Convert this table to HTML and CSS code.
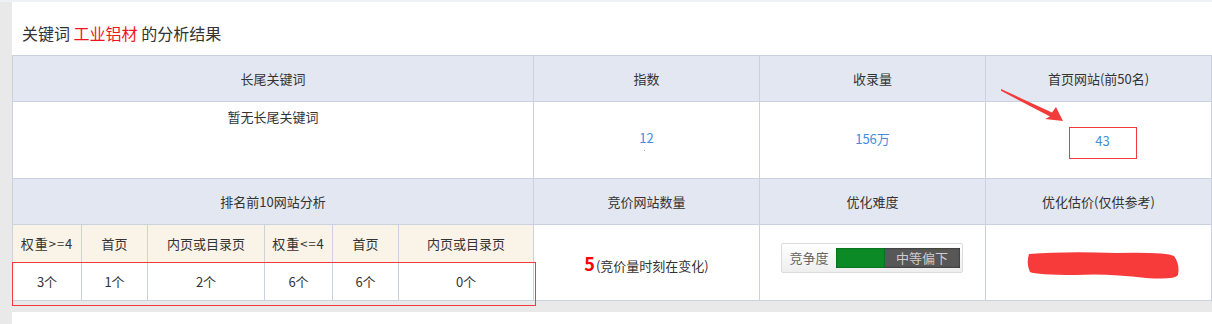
FILE: index.html
```html
<!DOCTYPE html>
<html lang="zh-CN">
<head>
  <meta charset="UTF-8">
  <title>关键词分析结果</title>
  <link rel="stylesheet" href="styles.css">
</head>
<body>

  <div class="page">
    <div class="panel">
      <div class="result-title">关键词 <span class="kw">工业铝材</span> 的分析结果</div>

      <div class="table-wrap">
        <table class="result">
          <colgroup>
            <col style="width:69px"><col style="width:66px"><col style="width:117px">
            <col style="width:68px"><col style="width:66px"><col style="width:135px">
            <col style="width:226px"><col style="width:226px"><col style="width:226px">
          </colgroup>
          <tr class="head">
            <th colspan="6">长尾关键词</th>
            <th>指数</th>
            <th>收录量</th>
            <th>首页网站(前50名)</th>
          </tr>
          <tr class="data">
            <td colspan="6" class="longtail">暂无长尾关键词</td>
            <td><span class="num">12</span><span class="dot"></span></td>
            <td><span class="num">156万</span></td>
            <td><span class="num boxed">43</span></td>
          </tr>
          <tr class="head">
            <th colspan="6">排名前10网站分析</th>
            <th>竞价网站数量</th>
            <th>优化难度</th>
            <th>优化估价(仅供参考)</th>
          </tr>
          <tr class="sub">
            <th class="cmp">权重&gt;=4</th>
            <th>首页</th>
            <th>内页或目录页</th>
            <th class="cmp">权重&lt;=4</th>
            <th>首页</th>
            <th>内页或目录页</th>
            <td rowspan="2" class="bid"><span class="bid-num">5</span>(竞价量时刻在变化)</td>
            <td rowspan="2" class="diff">
              <div class="level">
                <span class="level-label">竞争度</span>
                <span class="level-bar">
                  <span class="level-fill"></span>
                  <span class="level-text">中等偏下</span>
                </span>
              </div>
            </td>
            <td rowspan="2" class="price">
              <svg class="scribble" width="156" height="30" viewBox="0 0 156 30">
                <path d="M3 4 Q40 1 90 3 Q140 2 148 6 Q154 14 152 25 Q149 30 120 28 Q80 23 50 25 Q10 25 4 22 Q0 14 3 4 Z" fill="#f73b3b"/>
              </svg>
            </td>
          </tr>
          <tr class="counts">
            <td>3个</td>
            <td>1个</td>
            <td>2个</td>
            <td>6个</td>
            <td>6个</td>
            <td>0个</td>
          </tr>
        </table>

        <!-- 标注：箭头和红框 -->
        <svg class="mark-arrow" width="66" height="36" viewBox="0 0 66 36">
          <polygon points="0,0 51,23.5 55,18 62,32 44,30 49,27.5 0,1.8" fill="#f23c3c"/>
        </svg>
        <div class="mark-box"></div>
      </div>
    </div>
    <div class="panel next"></div>
  </div>

</body>
</html>
```

FILE: styles.css
```css
body {
  margin: 0;
  background: #e9e9e9;
  font-family: "Noto Sans CJK SC", "Noto Sans", sans-serif;
  font-size: 13px;
  color: #333333;
  overflow: hidden;
}

.page {
  padding-left: 12px;
  border-top: 2px solid #eef1f5;
}

.panel {
  background: #ffffff;
}

.panel.next {
  margin-top: 11px;
  height: 40px;
}

.result-title {
  font-size: 16px;
  line-height: 22px;
  padding: 20px 0 11px 10px;
}

.result-title .kw {
  color: #f0141e;
}

.table-wrap {
  position: relative;
}

.result {
  border-collapse: collapse;
  table-layout: fixed;
  width: 1200px;
}

.result th,
.result td {
  box-sizing: border-box;
  border: 1px solid #cbd1de;
  text-align: center;
  padding: 0;
  font-weight: normal;
}

.result tr.head th {
  background: #e2e7f1;
  height: 46px;
}

.result tr.data td {
  height: 77px;
}

.result td.longtail {
  vertical-align: top;
  padding-top: 5px;
}

.num {
  color: #3f8fde;
  position: relative;
  top: -2px;
}

.dot {
  display: block;
  width: 1px;
  height: 1px;
  background: #7ab0e8;
  margin: 0 auto;
  position: relative;
  left: -2px;
  top: 1px;
}

.boxed {
  display: inline-block;
  width: 66px;
  height: 30px;
  line-height: 26px;
  border: 1px solid #f23c3c;
  top: 3px;
  left: 4px;
}

.result tr.sub th {
  background: #faf3e7;
  height: 38px;
}

.result th.cmp {
  letter-spacing: 1px;
}

.result tr.counts td {
  height: 38px;
}

.bid {
  padding-top: 6px;
}

.bid-num {
  color: #ff0000;
  font-size: 18px;
  font-weight: bold;
  margin-right: 1px;
}

.level {
  display: inline-flex;
  align-items: center;
  width: 180px;
  height: 28px;
  border: 1px solid #dddddd;
  border-radius: 2px;
  background: linear-gradient(#ffffff, #eeeeee);
  position: relative;
  left: -1px;
  top: -5px;
}

.level-label {
  color: #666666;
  padding: 0 7px 0 8px;
}

.level-bar {
  display: flex;
  width: 124px;
  height: 20px;
  background: #575757;
  box-shadow: inset 0 0 2px #111111;
}

.level-fill {
  width: 49px;
  background: #0b8a26;
  box-shadow: inset 0 0 2px #024411;
}

.level-text {
  flex: 1;
  color: #cccccc;
  line-height: 20px;
}

.scribble {
  display: block;
  margin: 4px 0 0 40px;
}

.mark-arrow {
  position: absolute;
  left: 989px;
  top: 34px;
}

.mark-box {
  position: absolute;
  left: 0;
  top: 207px;
  width: 522px;
  height: 42px;
  border: 1px solid #f23c3c;
}
```
